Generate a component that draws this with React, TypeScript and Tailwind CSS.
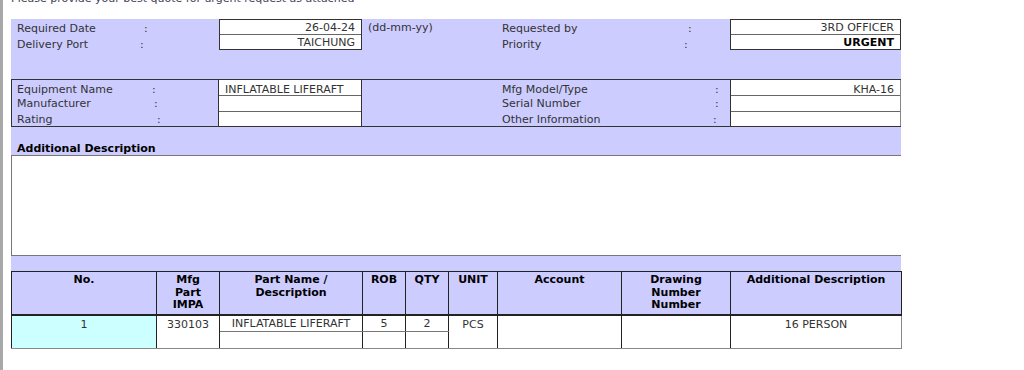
import React from "react";

type Field = { label: string; labelWidth: string; value?: string; bold?: boolean };

const requestLeft: Field[] = [
  { label: "Required Date", labelWidth: "w-[127px]", value: "26-04-24" },
  { label: "Delivery Port", labelWidth: "w-[123px]", value: "TAICHUNG" },
];

const requestRight: Field[] = [
  { label: "Requested by", labelWidth: "w-[186px]", value: "3RD OFFICER" },
  { label: "Priority", labelWidth: "w-[182px]", value: "URGENT", bold: true },
];

const equipLeft: Field[] = [
  { label: "Equipment Name", labelWidth: "w-[135px]", value: "INFLATABLE LIFERAFT" },
  { label: "Manufacturer", labelWidth: "w-[137px]" },
  { label: "Rating", labelWidth: "w-[140px]" },
];

const equipRight: Field[] = [
  { label: "Mfg Model/Type", labelWidth: "w-[213px]", value: "KHA-16" },
  { label: "Serial Number", labelWidth: "w-[213px]" },
  { label: "Other Information", labelWidth: "w-[211px]" },
];

// first equipment row sits a little low in its cell
const labelRows = ["h-[15px] pt-[3px]", "mt-[1px] h-[15px]", "mt-[1px] h-[14px]"];
const valueRows = ["h-[15px] pt-[3px]", "h-[16px]", "h-[15px]"];

const Label: React.FC<{ f: Field; h: string }> = ({ f, h }) => (
  <div className={`flex items-center ${h}`}>
    <span className={f.labelWidth}>{f.label}</span>
    <span>:</span>
  </div>
);

const ValueBox: React.FC<{ fields: Field[]; align: "left" | "right"; heights: string[] }> = ({
  fields,
  align,
  heights,
}) => (
  <div className="flex flex-col bg-white">
    {fields.map((f, i) => (
      <div
        key={f.label}
        className={`flex items-center ${heights[i]} ${i > 0 ? "border-t border-[#666]" : ""} ${
          align === "right" ? "justify-end pr-[6px]" : "pl-[6px]"
        } ${f.bold ? "font-bold text-black" : ""}`}
      >
        {f.value}
      </div>
    ))}
  </div>
);

const headers = [
  ["No."],
  ["Mfg", "Part", "IMPA"],
  ["Part Name /", "Description"],
  ["ROB"],
  ["QTY"],
  ["UNIT"],
  ["Account"],
  ["Drawing", "Number", "Number"],
  ["Additional Description"],
];

const colWidths = [145, 63, 143, 43, 43, 49, 124, 109, 171];

export default function App() {
  return (
    <div
      className="flex min-h-[370px] bg-white text-[11px] leading-[13px] text-[#333]"
      style={{ fontFamily: '"DejaVu Sans", Verdana, sans-serif' }}
    >
      <div className="w-[3px] shrink-0 bg-[#a8a8a8]" />
      <div className="pl-[8px]">
        <p className="-mt-[8px] h-[27px] text-[#44445a]">
          Please provide your best quote for urgent request as attached
        </p>

        {/* request header */}
        <div className="flex h-[60px] w-[890px] bg-[#ccccff]">
          <div className="w-[208px] pl-[6px] pt-[1px]">
            <Label f={requestLeft[0]} h="h-[16px]" />
            <Label f={requestLeft[1]} h="h-[16px]" />
          </div>
          <div className="h-[31px] w-[143px] border border-[#333]">
            <ValueBox fields={requestLeft} align="right" heights={["h-[14px]", "h-[15px]"]} />
          </div>
          <div className="w-[140px] pl-[6px] pt-[2px]">(dd-mm-yy)</div>
          <div className="w-[228px] pt-[1px]">
            <Label f={requestRight[0]} h="h-[16px]" />
            <Label f={requestRight[1]} h="h-[16px]" />
          </div>
          <div className="h-[31px] w-[171px] border border-[#333]">
            <ValueBox fields={requestRight} align="right" heights={["h-[14px]", "h-[15px]"]} />
          </div>
        </div>

        {/* equipment */}
        <div className="flex w-[890px] border-y border-[#333] bg-[#ccccff]">
          <div className="w-[208px] border-x border-[#333] pl-[5px]">
            {equipLeft.map((f, i) => (
              <Label key={f.label} f={f} h={labelRows[i]} />
            ))}
          </div>
          <div className="w-[143px] border-r border-[#333]">
            <ValueBox fields={equipLeft} align="left" heights={valueRows} />
          </div>
          <div className="w-[140px]" />
          <div className="w-[228px]">
            {equipRight.map((f, i) => (
              <Label key={f.label} f={f} h={labelRows[i]} />
            ))}
          </div>
          <div className="w-[171px] border-x border-[#333] border-r-[#888]">
            <ValueBox fields={equipRight} align="right" heights={valueRows} />
          </div>
        </div>

        {/* additional description */}
        <div className="w-[890px] bg-[#ccccff]">
          <div className="flex h-[28px] items-end pl-[6px] font-bold text-black">
            Additional Description
          </div>
          <div className="h-[101px] border-y border-l border-[#777] bg-white" />
          <div className="h-[15px]" />
        </div>

        {/* parts */}
        <table className="w-[890px] table-fixed border-collapse">
          <colgroup>
            {colWidths.map((w, i) => (
              <col key={i} style={{ width: w }} />
            ))}
          </colgroup>
          <thead>
            <tr className="h-[43px] bg-[#ccccff]">
              {headers.map((lines, i) => (
                <th
                  key={i}
                  className="border border-b-2 border-[#222] px-[2px] pt-[2px] text-center align-top font-bold leading-[12.5px] text-black"
                >
                  {lines.map((l) => (
                    <div key={l + i}>{l}</div>
                  ))}
                </th>
              ))}
            </tr>
          </thead>
          <tbody>
            <tr className="h-[17px]">
              <td rowSpan={2} className="border border-[#222] border-b-[#888] bg-[#ccffff] pt-[2px] text-center align-top">
                1
              </td>
              <td rowSpan={2} className="border border-[#222] border-b-[#888] pt-[2px] text-center align-top">
                330103
              </td>
              <td className="border border-[#222] border-b-[#777] text-center">INFLATABLE LIFERAFT</td>
              <td className="border border-[#222] border-b-[#777] text-center">5</td>
              <td className="border border-[#222] border-b-[#777] text-center">2</td>
              <td rowSpan={2} className="border border-[#222] border-b-[#888] pt-[2px] text-center align-top">
                PCS
              </td>
              <td rowSpan={2} className="border border-[#222] border-b-[#888] bg-white" />
              <td rowSpan={2} className="border border-[#222] border-b-[#888] bg-white" />
              <td rowSpan={2} className="border border-[#222] border-r-[#888] border-b-[#888] pt-[2px] text-center align-top">
                16 PERSON
              </td>
            </tr>
            <tr className="h-[17px]">
              <td className="border border-[#222] border-b-[#888]" />
              <td className="border border-[#222] border-b-[#888]" />
              <td className="border border-[#222] border-b-[#888]" />
            </tr>
          </tbody>
        </table>
      </div>
    </div>
  );
}
